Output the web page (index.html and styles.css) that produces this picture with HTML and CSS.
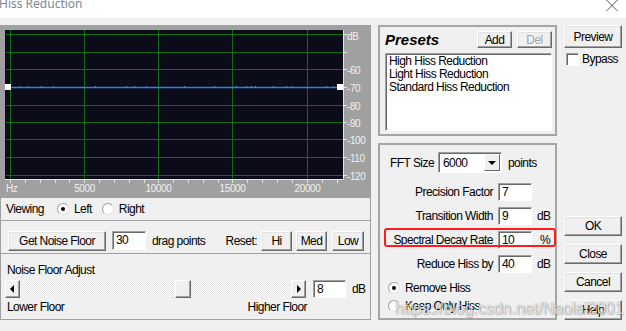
FILE: index.html
```html
<!DOCTYPE html>
<html lang="en">
<head>
  <meta charset="UTF-8">
  <title>Hiss Reduction</title>
  <link rel="stylesheet" href="styles.css">
</head>
<body>

<div class="titlebar">
  <span class="title">Hiss Reduction</span>
  <svg class="close-x" width="12" height="11" viewBox="0 0 12 11">
    <path d="M0.5 0 L11.5 11 M11.5 0 L0.5 11" stroke="#555" stroke-width="1" fill="none"/>
  </svg>
</div>

<div class="dialog">
  <div class="left-col">
    <svg class="graph" width="370" height="173" viewBox="0 0 370 173">
      <rect width="370" height="173" fill="#a0a0a0"/>
      <rect x="5" y="5" width="338" height="149" fill="#0b0b19"/>
      <g stroke="#0f6b14" stroke-width="1" fill="none">
        <path d="M6 9.5H343M6 27.5H343M6 44.5H343M6 62.5H343M6 80.5H343M6 97.5H343M6 114.5H343M6 132.5H343M6 150.5H343"/>
        <path d="M10.5 5V154M84.5 5V154M158.5 5V154M232.5 5V154M307.5 5V154"/>
      </g>
      <g stroke="#e6e6e6" stroke-width="1" fill="none">
        <path d="M343.5 5V155M5 154.5H344"/>
        <path d="M343 9.5H347M343 27.5H347M343 44.5H347M343 62.5H347M343 80.5H347M343 97.5H347M343 114.5H347M343 132.5H347M343 150.5H347"/>
        <path d="M10.5 155V158M25.5 155V158M40.5 155V158M55.5 155V158M69.5 155V158M84.5 155V158M99.5 155V158M114.5 155V158M129.5 155V158M144.5 155V158M158.5 155V158M173.5 155V158M188.5 155V158M203.5 155V158M218.5 155V158M232.5 155V158M247.5 155V158M262.5 155V158M277.5 155V158M292.5 155V158M307.5 155V158M322.5 155V158M337.5 155V158"/>
      </g>
      <path d="M11 62.5H337" stroke="#3b7be6" stroke-width="1.4" fill="none"/>
      <path d="M20 61.5h1M27 61.5h1M41 61.5h1M53 61.5h1M95 61.5h1M126 61.5h1M134 61.5h1M146 61.5h1M184 61.5h1M214 61.5h1M236 61.5h1M246 61.5h1M251 61.5h1M255 61.5h1M273 61.5h1M286 61.5h1M292 61.5h1M326 61.5h1M333 61.5h1" stroke="#5b93f0" stroke-width="1"/>
      <rect x="5" y="59" width="6" height="6" fill="#fff"/>
      <rect x="337" y="59" width="6" height="6" fill="#fff"/>
      <g class="axis-text">
        <text x="347" y="15">dB</text>
        <text x="347" y="48.5">-60</text>
        <text x="347" y="66.5">-70</text>
        <text x="347" y="84.5">-80</text>
        <text x="347" y="101.5">-90</text>
        <text x="347" y="118.5">-100</text>
        <text x="347" y="136.5">-110</text>
        <text x="347" y="154.5">-120</text>
        <text x="6" y="167">Hz</text>
        <text x="84.5" y="167" text-anchor="middle">5000</text>
        <text x="158.5" y="167" text-anchor="middle">10000</text>
        <text x="232.5" y="167" text-anchor="middle">15000</text>
        <text x="307.5" y="167" text-anchor="middle">20000</text>
      </g>
    </svg>

    <div class="lower">
      <div class="viewing-row">
        <span>Viewing</span>
        <span class="radio radio-left"><span class="radio-dot checked"></span>Left</span>
        <span class="radio radio-right"><span class="radio-dot"></span>Right</span>
      </div>

      <div class="floor-row">
        <button class="btn btn-floor">Get Noise Floor</button>
        <div class="field field-points">30</div>
        <span class="drag-label">drag points</span>
        <span class="reset-label">Reset:</span>
        <button class="btn btn-hi">Hi</button>
        <button class="btn btn-med">Med</button>
        <button class="btn btn-low">Low</button>
      </div>

      <div class="adjust">
        <div class="adjust-title">Noise Floor Adjust</div>
        <div class="adjust-bar">
          <div class="scrollbar">
            <div class="sb-btn sb-left"></div>
            <div class="sb-track"><div class="sb-thumb"></div></div>
            <div class="sb-btn sb-right"></div>
          </div>
          <div class="field field-db">8</div>
          <span class="db-label">dB</span>
        </div>
        <div class="adjust-ends">
          <span>Lower Floor</span>
          <span>Higher Floor</span>
        </div>
      </div>
    </div>
  </div>

  <div class="mid-col">
    <div class="group presets">
      <div class="presets-head">
        <span class="presets-title">Presets</span>
        <button class="btn btn-add">Add</button>
        <button class="btn btn-del" disabled>Del</button>
      </div>
      <div class="listbox">
        <div>High Hiss Reduction</div>
        <div>Light Hiss Reduction</div>
        <div>Standard Hiss Reduction</div>
      </div>
    </div>

    <div class="group params">
      <div class="fft-row">
        <span class="fft-label">FFT Size</span>
        <div class="select">
          <span>6000</span>
          <span class="select-arrow"></span>
        </div>
        <span class="points-label">points</span>
      </div>

      <div class="param-list">
        <div class="param">
          <span class="param-label">Precision Factor</span>
          <div class="field field-param">7</div>
        </div>
        <div class="param">
          <span class="param-label">Transition Width</span>
          <div class="field field-param">9</div>
          <span class="unit">dB</span>
        </div>
        <div class="param marked">
          <span class="param-label">Spectral Decay Rate</span>
          <div class="field field-param">10</div>
          <span class="unit unit-pct">%</span>
        </div>
        <div class="param">
          <span class="param-label">Reduce Hiss by</span>
          <div class="field field-param">40</div>
          <span class="unit">dB</span>
        </div>
      </div>

      <div class="mode-list">
        <span class="radio"><span class="radio-dot checked"></span>Remove Hiss</span>
        <span class="radio"><span class="radio-dot"></span>Keep Only Hiss</span>
      </div>
    </div>
  </div>

  <div class="right-col">
    <button class="btn btn-preview">Preview</button>
    <div class="bypass">
      <span class="checkbox"></span>
      <span>Bypass</span>
    </div>
    <div class="action-btns">
      <button class="btn btn-action">OK</button>
      <button class="btn btn-action">Close</button>
      <button class="btn btn-action">Cancel</button>
      <button class="btn btn-action">Help</button>
    </div>
  </div>
</div>

<div class="watermark">https://blog.csdn.net/Naolai2001</div>

</body>
</html>
```

FILE: styles.css
```css
body {
  margin: 0;
  width: 626px;
  height: 331px;
  overflow: hidden;
  position: relative;
  background-color: #f0f0f0;
  font-family: "Liberation Sans", Arial, sans-serif;
  font-size: 12px;
  letter-spacing: -0.55px;
  color: #000;
  white-space: nowrap;
}
.titlebar {
  height: 18px;
  background-color: #fff;
  position: relative;
  overflow: hidden;
}
.title {
  display: block;
  margin: -3px 0 0 -1px;
  font-family: "Noto Sans", sans-serif;
  font-size: 12px;
  letter-spacing: 0;
  line-height: 14px;
  color: #7b8795;
}
.close-x {
  position: absolute;
  right: 8px;
  top: 0;
}
.dialog {
  display: flex;
  padding-top: 7px;
  height: 295px;
}

/* left column */
.left-col {
  width: 370px;
  border-right: 1px solid #a0a0a0;
  display: flex;
  flex-direction: column;
}
.graph {
  display: block;
}
.axis-text text {
  font-family: "Liberation Sans", Arial, sans-serif;
  font-size: 10px;
  letter-spacing: -0.4px;
  fill: #f0f0f0;
}
.lower {
  flex: 1;
  border-left: 1px solid #a0a0a0;
  display: flex;
  flex-direction: column;
}
.viewing-row {
  height: 23px;
  box-sizing: border-box;
  display: flex;
  align-items: center;
  padding-left: 5px;
  border-bottom: 1px solid #a0a0a0;
}
.radio {
  display: flex;
  align-items: center;
}
.radio-left {
  margin-left: 13px;
}
.radio-right {
  margin-left: 10px;
}
.radio-dot {
  width: 12px;
  height: 12px;
  margin-right: 5px;
  box-sizing: border-box;
  border-radius: 50%;
  background-color: #fff;
  border: 1px solid;
  border-color: #a0a0a0 #e3e3e3 #e3e3e3 #a0a0a0;
  position: relative;
}
.radio-dot.checked::after {
  content: "";
  position: absolute;
  left: 3px;
  top: 3px;
  width: 4px;
  height: 4px;
  border-radius: 50%;
  background-color: #000;
}
.floor-row {
  height: 33px;
  box-sizing: border-box;
  display: flex;
  align-items: flex-start;
  padding: 10px 6px 0 7px;
  border-bottom: 1px solid #a0a0a0;
}

/* buttons and fields */
.btn {
  font: inherit;
  letter-spacing: inherit;
  color: #000;
  background-color: #f0f0f0;
  padding: 0;
  box-sizing: border-box;
  border: 1px solid;
  border-color: #fff #696969 #696969 #fff;
  box-shadow: inset -1px -1px #a0a0a0, inset 1px 1px #e3e3e3;
}
.btn[disabled] {
  color: #a0a0a0;
  text-shadow: 1px 1px #fff;
}
.field {
  background-color: #fff;
  box-sizing: border-box;
  border: 1px solid;
  border-color: #a0a0a0 #fff #fff #a0a0a0;
  box-shadow: inset 1px 1px #696969;
  padding-left: 3px;
  line-height: 17px;
}
.btn-floor {
  width: 98px;
  height: 20px;
}
.field-points {
  width: 34px;
  height: 19px;
  margin-left: 6px;
}
.drag-label {
  margin-left: 6px;
  line-height: 20px;
}
.reset-label {
  margin-left: auto;
  margin-right: 4px;
  line-height: 20px;
}
.btn-hi, .btn-med {
  width: 31px;
  height: 20px;
}
.btn-med {
  margin-left: 4px;
}
.btn-low {
  width: 32px;
  height: 20px;
  margin-left: 5px;
}
.adjust {
  flex: 1;
  border-bottom: 1px solid #a0a0a0;
}
.adjust-title {
  padding: 9px 0 0 6px;
  line-height: 14px;
}
.adjust-bar {
  display: flex;
  align-items: center;
  margin-top: 3px;
  padding-left: 4px;
}
.scrollbar {
  width: 301px;
  height: 18px;
  display: flex;
}
.sb-btn {
  width: 15px;
  height: 18px;
  box-sizing: border-box;
  background-color: #f0f0f0;
  border: 1px solid;
  border-color: #fff #696969 #696969 #fff;
  box-shadow: inset -1px -1px #a0a0a0;
  position: relative;
}
.sb-btn::after {
  content: "";
  position: absolute;
  top: 4px;
  border-top: 4px solid transparent;
  border-bottom: 4px solid transparent;
}
.sb-left::after {
  left: 4px;
  border-right: 4px solid #000;
}
.sb-right::after {
  left: 5px;
  border-left: 4px solid #000;
}
.sb-track {
  flex: 1;
  position: relative;
  background: repeating-conic-gradient(#fdfdfd 0 25%, #e6e6e6 0 50%) 0 0 / 2px 2px;
}
.sb-thumb {
  position: absolute;
  left: 155px;
  top: 0;
  width: 16px;
  height: 18px;
  box-sizing: border-box;
  background-color: #f0f0f0;
  border: 1px solid;
  border-color: #fff #696969 #696969 #fff;
  box-shadow: inset -1px -1px #a0a0a0;
}
.field-db {
  width: 33px;
  height: 18px;
  margin-left: 7px;
}
.db-label {
  margin-left: 6px;
}
.adjust-ends {
  width: 300px;
  margin: 2px 0 0 6px;
  display: flex;
  justify-content: space-between;
  line-height: 14px;
}

/* presets + parameters */
.mid-col {
  margin-left: 7px;
  width: 179px;
  display: flex;
  flex-direction: column;
  gap: 7px;
}
.group {
  border: 2px solid #a5a5a5;
  box-sizing: border-box;
}
.presets {
  height: 111px;
  padding: 4px 3px 3px 5px;
}
.presets-head {
  display: flex;
  align-items: center;
  height: 17px;
}
.presets-title {
  margin-right: auto;
  font-family: "Liberation Sans", Arial, sans-serif;
  font-size: 15px;
  letter-spacing: 0;
  font-weight: bold;
  font-style: italic;
}
.btn-add, .btn-del {
  width: 35px;
  height: 17px;
}
.btn-del {
  margin-left: 5px;
}
.listbox {
  margin-top: 5px;
  height: 78px;
  box-sizing: border-box;
  background-color: #fff;
  border: 1px solid;
  border-color: #a0a0a0 #fff #fff #a0a0a0;
  box-shadow: inset 1px 1px #696969;
  padding: 1px 2px 0 3px;
  line-height: 13px;
}
.params {
  flex: 1;
  padding-top: 7px;
}
.fft-row {
  display: flex;
  align-items: center;
  height: 21px;
  padding-left: 10px;
}
.fft-label {
  width: 48px;
}
.select {
  width: 64px;
  height: 21px;
  box-sizing: border-box;
  background-color: #fff;
  border: 1px solid;
  border-color: #a0a0a0 #fff #fff #a0a0a0;
  box-shadow: inset 1px 1px #696969;
  display: flex;
  align-items: center;
  padding: 0 1px 0 4px;
}
.select span:first-child {
  flex: 1;
}
.select-arrow {
  width: 16px;
  height: 17px;
  box-sizing: border-box;
  background-color: #f0f0f0;
  border: 1px solid;
  border-color: #fff #696969 #696969 #fff;
  position: relative;
}
.select-arrow::after {
  content: "";
  position: absolute;
  left: 3px;
  top: 6px;
  border-left: 4px solid transparent;
  border-right: 4px solid transparent;
  border-top: 4px solid #000;
}
.points-label {
  margin-left: 6px;
}
.param-list {
  margin-top: 10px;
  display: flex;
  flex-direction: column;
  gap: 6px;
}
.param {
  display: flex;
  align-items: center;
  height: 18px;
  position: relative;
}
.param-label {
  width: 113px;
  text-align: right;
}
.field-param {
  width: 34px;
  height: 18px;
  margin-left: 5px;
}
.unit {
  margin-left: 5px;
}
.unit-pct {
  margin-left: 8px;
}
.param.marked::after {
  content: "";
  position: absolute;
  left: 4px;
  top: -3px;
  width: 172px;
  height: 19px;
  box-sizing: border-box;
  border: 2px solid #ff1c1c;
  border-radius: 3px;
}
.mode-list {
  margin-top: 6px;
  padding-left: 8px;
}
.mode-list .radio {
  height: 18px;
}

/* right column */
.right-col {
  margin-left: 7px;
  width: 58px;
  display: flex;
  flex-direction: column;
}
.btn-preview {
  height: 23px;
}
.bypass {
  display: flex;
  align-items: center;
  margin: 4px 0 0 2px;
}
.checkbox {
  width: 13px;
  height: 13px;
  margin-right: 3px;
  box-sizing: border-box;
  background-color: #fff;
  border: 1px solid;
  border-color: #a0a0a0 #fff #fff #a0a0a0;
  box-shadow: inset 1px 1px #696969;
}
.action-btns {
  margin-top: auto;
  display: flex;
  flex-direction: column;
  gap: 8px;
}
.btn-action {
  height: 20px;
}
.watermark {
  position: absolute;
  left: 395px;
  top: 299px;
  font-family: "Liberation Sans", Arial, sans-serif;
  font-size: 16px;
  letter-spacing: 0;
  line-height: 20px;
  color: rgba(255, 255, 255, 0.8);
  text-shadow: 0 0 1px rgba(0, 0, 0, 0.45), 1px 1px 1px rgba(0, 0, 0, 0.2);
}
```
